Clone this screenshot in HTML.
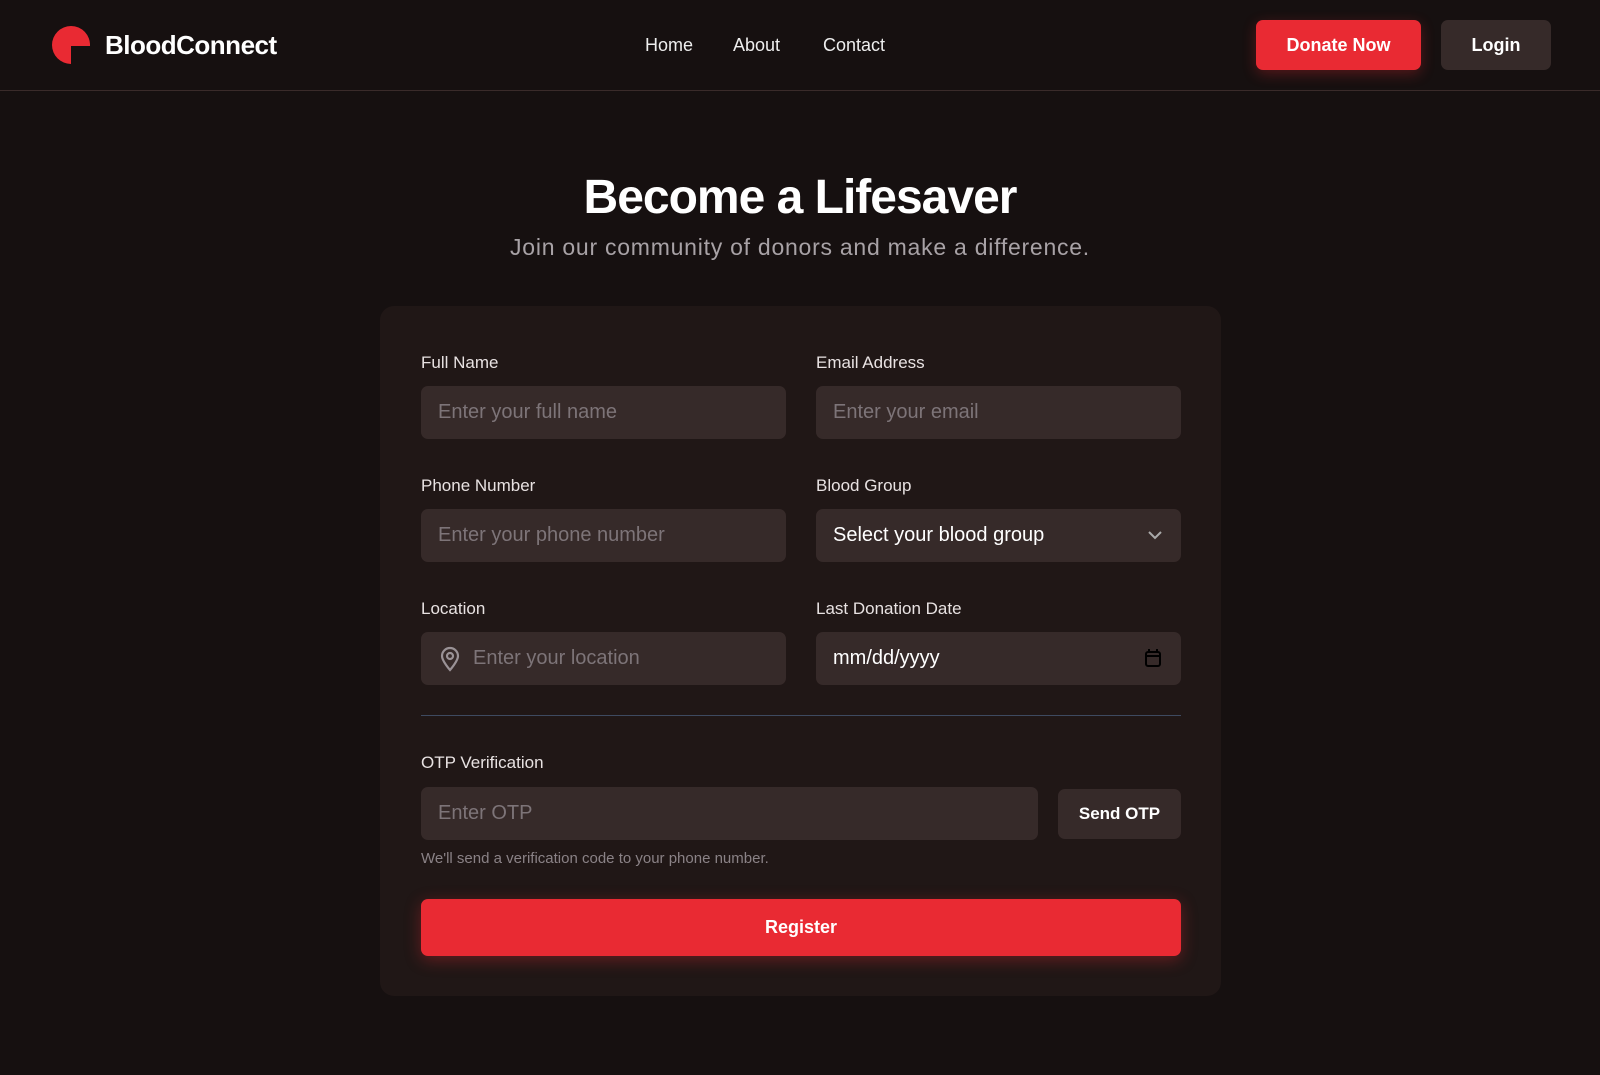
<!DOCTYPE html>
<html><head><meta charset="utf-8">
<style>
*{box-sizing:border-box;margin:0;padding:0}
body{width:1600px;height:1075px;background:#161010;font-family:"Liberation Sans",sans-serif;color:#fff;overflow:hidden;position:relative}
.hdr{position:absolute;left:0;top:0;width:1600px;height:91px;border-bottom:1px solid #3a2b2a}
.logo{position:absolute;left:52px;top:26px}
.brand{position:absolute;left:105px;top:30px;font-size:26px;font-weight:bold;letter-spacing:-0.5px}
.nav{position:absolute;top:35px;font-size:18px;color:#eee}
.btn{position:absolute;border-radius:7px;font-weight:bold;font-size:18px;display:flex;align-items:center;justify-content:center}
h1{position:absolute;left:0;width:1600px;text-align:center;top:170px;font-size:48px;font-weight:bold;letter-spacing:-1px}
.sub{position:absolute;left:0;width:1600px;text-align:center;top:234px;font-size:23px;color:#a8a2a6;letter-spacing:0.75px}
.card{position:absolute;left:380px;top:306px;width:841px;height:690px;background:#201716;border-radius:14px}
.lbl{position:absolute;font-size:17px;color:#e8e2e2}
.inp{position:absolute;height:53px;background:#362a29;border-radius:7px;font-size:20px;color:#7d7478;padding-left:17px;display:flex;align-items:center}
</style></head><body>
<div class="hdr">
<svg class="logo" width="38" height="38" viewBox="0 0 38 38"><path d="M19 0A19 19 0 0 0 19 38V20H38A19 19 0 0 0 19 0Z" fill="#e92a33"/></svg>
<div class="brand">BloodConnect</div>
<div class="nav" style="left:645px">Home</div>
<div class="nav" style="left:733px">About</div>
<div class="nav" style="left:823px">Contact</div>
<div class="btn" style="left:1256px;top:20px;width:165px;height:50px;background:#e92a33;box-shadow:0 4px 14px rgba(233,42,51,.3)">Donate Now</div>
<div class="btn" style="left:1441px;top:20px;width:110px;height:50px;background:#362a29">Login</div>
</div>
<h1>Become a Lifesaver</h1>
<div class="sub">Join our community of donors and make a difference.</div>
<div class="card">
<div class="lbl" style="left:41px;top:47px">Full Name</div>
<div class="inp" style="left:41px;top:80px;width:365px">Enter your full name</div>
<div class="lbl" style="left:436px;top:47px">Email Address</div>
<div class="inp" style="left:436px;top:80px;width:365px">Enter your email</div>
<div class="lbl" style="left:41px;top:170px">Phone Number</div>
<div class="inp" style="left:41px;top:203px;width:365px">Enter your phone number</div>
<div class="lbl" style="left:436px;top:170px">Blood Group</div>
<div class="inp" style="left:436px;top:203px;width:365px;color:#fff">Select your blood group
<svg style="position:absolute;right:18px;top:20px" width="16" height="12" viewBox="0 0 16 12"><path d="M2 3l6 6 6-6" stroke="#aaa" stroke-width="2" fill="none"/></svg></div>
<div class="lbl" style="left:41px;top:293px">Location</div>
<div class="inp" style="left:41px;top:326px;width:365px;padding-left:52px">
<svg style="position:absolute;left:18px;top:14px" width="22" height="26" viewBox="0 0 22 26"><path d="M11 24C11 24 3 15 3 10a8 8 0 0 1 16 0c0 5-8 14-8 14Z" stroke="#9a9296" stroke-width="2.2" fill="none"/><circle cx="11" cy="10" r="3" stroke="#9a9296" stroke-width="2.2" fill="none"/></svg>Enter your location</div>
<div class="lbl" style="left:436px;top:293px">Last Donation Date</div>
<div class="inp" style="left:436px;top:326px;width:365px;color:#fff">mm/dd/yyyy
<svg style="position:absolute;right:20px;top:17px" width="16" height="18" viewBox="0 0 16 18"><rect x="1" y="3" width="14" height="14" rx="2" fill="none" stroke="#000" stroke-width="2"/><path d="M1 7h14M4 0v4M12 0v4" stroke="#000" stroke-width="2"/></svg></div>
<div style="position:absolute;left:41px;top:409px;width:760px;height:1px;background:#3e4a60"></div>
<div class="lbl" style="left:41px;top:447px">OTP Verification</div>
<div class="inp" style="left:41px;top:481px;width:617px">Enter OTP</div>
<div class="btn" style="left:678px;top:483px;width:123px;height:50px;background:#362a29;font-size:17px">Send OTP</div>
<div style="position:absolute;left:41px;top:544px;font-size:15px;color:#8a8286">We'll send a verification code to your phone number.</div>
<div class="btn" style="left:41px;top:593px;width:760px;height:57px;background:#e92a33;font-size:18px;box-shadow:0 4px 16px rgba(233,42,51,.35)">Register</div>
</div>
</body></html>
